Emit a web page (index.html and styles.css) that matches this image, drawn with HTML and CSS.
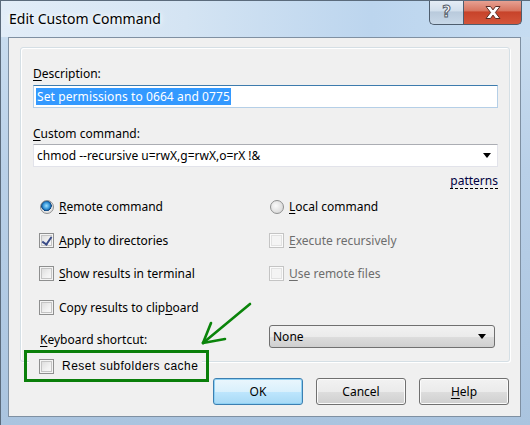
FILE: index.html
```html
<!DOCTYPE html>
<html lang="en">
<head>
  <meta charset="UTF-8">
  <title>Edit Custom Command</title>
  <link rel="stylesheet" href="styles.css">
</head>
<body>
  <div class="window">
    <div class="titlebar">
      <span class="title">Edit Custom Command</span>
      <div class="caption-buttons">
        <div class="cap-btn cap-help">?</div>
        <div class="cap-btn cap-close">
          <svg width="20" height="15" viewBox="0 0 20 15">
            <path d="M3 1.5h4.5l2.5 3.4 2.5-3.4h4.5l-4.6 6 4.6 6h-4.5l-2.5-3.4-2.5 3.4h-4.5l4.6-6z" fill="#fff" stroke="#5a2c24" stroke-width="1" stroke-linejoin="round"/>
          </svg>
        </div>
      </div>
    </div>

    <div class="client">
      <div class="panel">
        <div class="field-label"><u>D</u>escription:</div>
        <div class="textbox"><span class="selected">Set permissions to 0664 and 0775</span></div>

        <div class="field-label"><u>C</u>ustom command:</div>
        <div class="combo-edit">
          <span>chmod --recursive u=rwX,g=rwX,o=rX !&amp;</span>
          <span class="arrow"></span>
        </div>
        <div class="patterns-row"><span class="link">patterns</span></div>

        <div class="options">
          <div class="opt"><span class="radio checked"></span><span><u>R</u>emote command</span></div>
          <div class="opt"><span class="radio"></span><span><u>L</u>ocal command</span></div>
          <div class="opt"><span class="check checked"></span><span><u>A</u>pply to directories</span></div>
          <div class="opt disabled"><span class="check"></span><span><u>E</u>xecute recursively</span></div>
          <div class="opt"><span class="check"></span><span><u>S</u>how results in terminal</span></div>
          <div class="opt disabled"><span class="check"></span><span><u>U</u>se remote files</span></div>
          <div class="opt"><span class="check"></span><span>Copy results to clip<u>b</u>oard</span></div>
        </div>

        <div class="shortcut-row">
          <span class="shortcut-label"><u>K</u>eyboard shortcut:</span>
          <div class="combo-btn"><span>None</span><span class="arrow"></span></div>
        </div>
      </div>

      <div class="footer">
        <div class="highlight">
          <div class="reset-opt"><span class="check"></span><span class="reset-text">Reset subfolders cache</span></div>
        </div>
        <div class="buttons">
          <div class="btn default">OK</div>
          <div class="btn">Cancel</div>
          <div class="btn"><u>H</u>elp</div>
        </div>
      </div>
    </div>

    <!-- hand-drawn pointer -->
    <svg class="pointer" width="530" height="425" viewBox="0 0 530 425">
      <g fill="none" stroke="#0a840a" stroke-width="2.6" stroke-linecap="round">
        <path d="M250 304 L203 343"/>
        <path d="M203 343 L211 323"/>
        <path d="M203 343 L225 339"/>
      </g>
    </svg>
  </div>
</body>
</html>
```

FILE: styles.css
```css
body {
  margin: 0;
  background: #ffffff;
  font-family: "Noto Sans", sans-serif;
  font-size: 12px;
  color: #000;
}
u {
  text-decoration: underline;
  text-underline-offset: 2px;
}

.window {
  position: relative;
  width: 530px;
  height: 425px;
  overflow: hidden;
  box-sizing: border-box;
  border-left: 1px solid #5b6b7c;
  border-top: 1px solid #5b6b7c;
  background: linear-gradient(180deg, #dce9f6 0%, #c8dcef 9%, #b9d0e8 40%, #aac4df 100%);
}
.titlebar {
  display: flex;
  height: 36px;
  background: linear-gradient(90deg, #e2edf8 0%, #d4e4f3 35%, #bcd5ee 70%, #c6dcf1 100%);
}
.title {
  align-self: center;
  margin-left: 8px;
  margin-top: -1px;
  font-size: 14px;
  color: #000;
  text-shadow: 0 0 8px #fff, 0 0 4px #fff;
}
.caption-buttons {
  display: flex;
  margin-left: auto;
  margin-right: 8px;
  margin-top: -1px;
  height: 25px;
}
.cap-btn {
  display: flex;
  align-items: center;
  justify-content: center;
  box-sizing: border-box;
  height: 25px;
  border: 1px solid #4e5d6e;
  border-top: none;
}
.cap-help {
  width: 34px;
  border-right: none;
  border-bottom-left-radius: 5px;
  background: linear-gradient(180deg, #e6eef6 0%, #d2dfec 45%, #b9cadc 50%, #c8d8e8 100%);
  font-family: "DejaVu Sans", sans-serif;
  font-weight: bold;
  font-size: 15px;
  color: #fff;
  -webkit-text-stroke: 1px #56606c;
}
.cap-close {
  width: 59px;
  border-bottom-right-radius: 5px;
  background: linear-gradient(180deg, #e8a597 0%, #d7745f 45%, #c7432a 50%, #d4553a 100%);
}

.client {
  box-sizing: border-box;
  margin-left: 7px;
  width: 513px;
  height: 380px;
  border: 1px solid #7f90a2;
  background: #f0f0f0;
}

.panel {
  box-sizing: border-box;
  margin: 9px 0 0 11px;
  width: 490px;
  height: 315px;
  padding: 0 11px 0 12px;
  border: 1px solid #d5dfe5;
  border-radius: 3px;
  box-shadow: inset 1px 1px 0 #fff, 1px 1px 0 #fff;
}
.field-label {
  margin-top: 18px;
  line-height: 16px;
}

.textbox {
  box-sizing: border-box;
  margin-top: 3px;
  height: 23px;
  padding: 2px 2px;
  border: 1px solid #b5cfe7;
  border-top-color: #3d7bad;
  background: #fff;
}
.selected {
  display: inline-block;
  line-height: 17px;
  padding: 0 1px;
  letter-spacing: 0.1px;
  background: #3399ff;
  color: #fff;
}

.combo-edit {
  box-sizing: border-box;
  display: flex;
  align-items: center;
  margin-top: 2px;
  height: 23px;
  padding: 0 6px 0 3px;
  border: 1px solid #e2e3ea;
  border-top-color: #abadb3;
  background: #fff;
}
.arrow {
  margin-left: auto;
  width: 0;
  height: 0;
  border-left: 4px solid transparent;
  border-right: 4px solid transparent;
  border-top: 5px solid #000;
}

.patterns-row {
  display: flex;
  justify-content: flex-end;
  margin-top: 6px;
  line-height: 16px;
}
.link {
  color: #000040;
  text-decoration: underline dashed #000;
  text-underline-offset: 3px;
}

.options {
  display: grid;
  grid-template-columns: 230px 1fr;
  grid-auto-rows: 17px;
  row-gap: 16.5px;
  margin-top: 9px;
  padding-left: 6px;
}
.opt {
  display: flex;
  align-items: center;
  gap: 5px;
}
.opt.disabled {
  color: #6d6d6d;
}

.check {
  box-sizing: border-box;
  display: inline-block;
  flex: none;
  width: 15px;
  height: 15px;
  border: 1px solid #8e8f8f;
  background: linear-gradient(135deg, #d8d8d8 0%, #f2f2f2 60%, #fbfbfb 100%);
  box-shadow: inset 0 0 0 1px #f4f4f4, inset 0 0 0 2px #c4c4c4;
  position: relative;
}
.disabled .check {
  border-color: #c4c4c4;
  background: #f4f4f4;
  box-shadow: inset 0 0 0 1px #fbfbfb, inset 0 0 0 2px #e2e2e2;
}
.check.checked::after {
  content: "";
  position: absolute;
  left: 4px;
  top: 1px;
  width: 4px;
  height: 8px;
  border: solid #3a4c88;
  border-width: 0 2px 2px 0;
  transform: rotate(35deg);
}

.radio {
  box-sizing: border-box;
  display: inline-block;
  flex: none;
  width: 14px;
  height: 14px;
  margin-left: 1px;
  border: 1px solid #8e8f8f;
  border-radius: 50%;
  background: radial-gradient(circle at 40% 40%, #fafafa 0%, #dcdcdc 70%, #cfcfcf 100%);
}
.radio.checked {
  background:
    radial-gradient(circle at 45% 40%, #9fe0ff 0%, #2e8fd4 35%, #0b3f7a 52%, transparent 56%),
    radial-gradient(circle, #f4f4f4 0%, #d8d8d8 100%);
}

.shortcut-row {
  display: flex;
  align-items: flex-end;
  margin-top: 9px;
  padding-left: 7px;
}
.shortcut-label {
  width: 229px;
  line-height: 16px;
  margin-bottom: 0;
}
.combo-btn {
  box-sizing: border-box;
  display: flex;
  align-items: center;
  width: 226px;
  height: 23px;
  padding: 0 8px 0 3px;
  border: 1px solid #707070;
  border-radius: 3px;
  background: linear-gradient(180deg, #f2f2f2 0%, #ebebeb 50%, #dddddd 51%, #cfcfcf 100%);
}

.footer {
  display: flex;
  align-items: flex-start;
  margin-top: -12px;
  padding: 0 11px 0 15px;
}
.highlight {
  box-sizing: border-box;
  width: 185px;
  height: 32px;
  padding: 0 4px 0 2px;
  border: 3px solid #0a7f0a;
  display: flex;
  align-items: center;
}
.reset-opt {
  display: flex;
  align-items: center;
  width: 100%;
  height: 18px;
  padding-left: 10px;
  background: #f0f0f0;
}
.reset-text {
  margin-left: 8px;
  font-family: "Liberation Sans", Arial, sans-serif;
  font-size: 12px;
  letter-spacing: 0.5px;
}

.buttons {
  display: flex;
  gap: 13px;
  margin-left: auto;
  margin-top: 28px;
}
.btn {
  box-sizing: border-box;
  display: flex;
  align-items: center;
  justify-content: center;
  width: 90px;
  height: 27px;
  border: 1px solid #707070;
  border-radius: 3px;
  background: linear-gradient(180deg, #f2f2f2 0%, #ebebeb 50%, #dddddd 51%, #cfcfcf 100%);
  box-shadow: inset 0 0 0 1px #fbfbfb;
}
.btn.default {
  border-color: #3c7fb1;
  background: linear-gradient(180deg, #eaf6fd 0%, #d9f0fc 50%, #bee6fd 51%, #a7d9f5 100%);
  box-shadow: inset 0 0 0 1px #8fd1f4;
}

.pointer {
  position: absolute;
  left: -1px;
  top: -1px;
  pointer-events: none;
}
```
